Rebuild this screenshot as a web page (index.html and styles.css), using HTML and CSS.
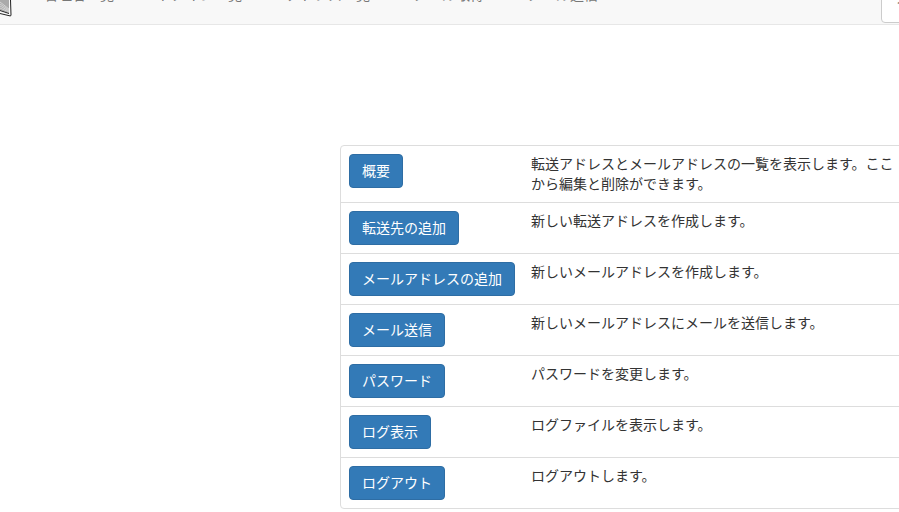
FILE: index.html
```html
<!DOCTYPE html>
<html lang="ja">
<head>
    <meta charset="UTF-8">
    <title>メール管理</title>
    <link rel="stylesheet" href="styles.css">
</head>
<body>
    <nav class="navbar">
        <a class="brand" href="#">
            <svg class="logo" viewBox="0 0 12 17" width="12" height="17">
                <path d="M0 10 L9 13 L9 0 L0 0 Z" fill="#aaa"/>
                <path d="M0 2 L9 9 M0 4 L9 10 M0 6 L9 11 M0 8 L9 12" stroke="#eee" stroke-width="0.6" fill="none"/>
                <path d="M0 10.500 L9 13.500 M0 13.500 L10.500 16 L11 15 L10.500 0" fill="none" stroke="#222" stroke-width="1"/>
            </svg>
        </a>
        <ul class="nav">
            <li><a href="#">管理者一覧</a></li>
            <li><a href="#">ドメイン一覧</a></li>
            <li><a href="#">アドレス一覧</a></li>
            <li><a href="#">メール取得</a></li>
            <li><a href="#">メール送信</a></li>
        </ul>
        <input class="search" type="text" placeholder="入力">
    </nav>

    <div class="content">
        <div class="panel">
            <table class="menu-table">
                <tr>
                    <td class="cell-btn"><a class="btn" href="#">概要</a></td>
                    <td class="cell-text">転送アドレスとメールアドレスの一覧を表示します。ここから編集と削除ができます。</td>
                </tr>
                <tr>
                    <td class="cell-btn"><a class="btn" href="#">転送先の追加</a></td>
                    <td class="cell-text">新しい転送アドレスを作成します。</td>
                </tr>
                <tr>
                    <td class="cell-btn"><a class="btn" href="#">メールアドレスの追加</a></td>
                    <td class="cell-text">新しいメールアドレスを作成します。</td>
                </tr>
                <tr>
                    <td class="cell-btn"><a class="btn" href="#">メール送信</a></td>
                    <td class="cell-text">新しいメールアドレスにメールを送信します。</td>
                </tr>
                <tr>
                    <td class="cell-btn"><a class="btn" href="#">パスワード</a></td>
                    <td class="cell-text">パスワードを変更します。</td>
                </tr>
                <tr>
                    <td class="cell-btn"><a class="btn" href="#">ログ表示</a></td>
                    <td class="cell-text">ログファイルを表示します。</td>
                </tr>
                <tr>
                    <td class="cell-btn"><a class="btn" href="#">ログアウト</a></td>
                    <td class="cell-text">ログアウトします。</td>
                </tr>
            </table>
        </div>
    </div>
</body>
</html>
```

FILE: styles.css
```css
html, body {
    height: 100%;
    overflow: hidden;
}
body {
    margin: 0;
    font-family: "Noto Sans CJK JP", "Liberation Sans", sans-serif;
    font-size: 14px;
    line-height: 20px;
    color: #333;
    background: #fff;
}
.navbar {
    display: flex;
    height: 24px;
    background: #f8f8f8;
    border-bottom: 1px solid #e7e7e7;
    overflow: hidden;
}
.brand {
    width: 23px;
    flex-shrink: 0;
}
.logo {
    display: block;
}
.nav {
    display: flex;
    list-style: none;
    margin: -16px 0 0 21px;
    padding: 0;
    gap: 44px;
}
.nav a {
    color: #777;
    text-decoration: none;
}
.search {
    width: 60px;
    height: 34px;
    box-sizing: border-box;
    margin: -11px -42px 0 auto;
    padding: 0 12px 20px 15px;
    border: 1px solid #ccc;
    border-radius: 4px;
    font: inherit;
    flex-shrink: 0;
}
.search::placeholder {
    color: #777;
}
.content {
    padding: 120px 0 0 340px;
}
.panel {
    width: 570px;
    border: 1px solid #ddd;
    border-radius: 4px;
}
.menu-table {
    width: 100%;
    border-collapse: collapse;
}
.menu-table td {
    padding: 8px;
    vertical-align: top;
    border-top: 1px solid #ddd;
}
.menu-table tr:first-child td {
    border-top: 0;
}
.menu-table .cell-text {
    padding: 7px 8px 9px;
}
.cell-btn {
    white-space: nowrap;
    width: 1px;
}
.btn {
    display: inline-block;
    padding: 5px 12px 7px;
    line-height: 20px;
    color: #fff;
    text-decoration: none;
    background: #337ab7;
    border: 1px solid #2e6da4;
    border-radius: 4px;
    vertical-align: top;
}
```
